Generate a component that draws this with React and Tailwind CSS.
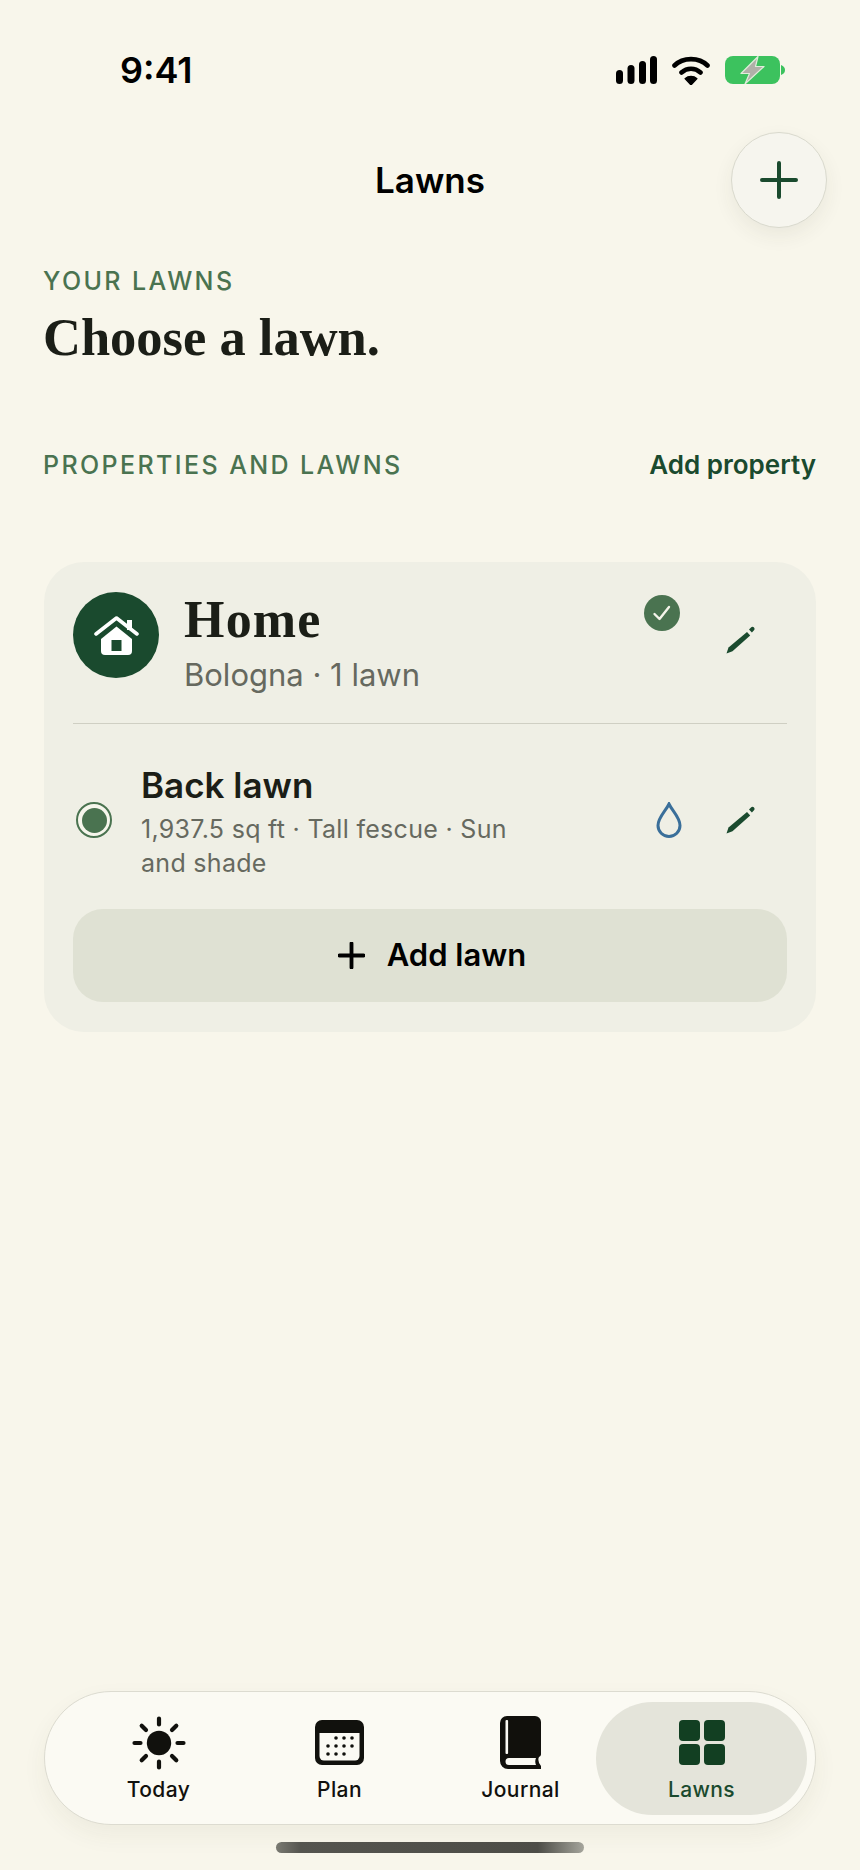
const Pencil = () => (
  <svg width="30" height="30" viewBox="0 0 30 30" fill="#1a4a2e">
    <path d="M0.5 28.5L2.5 22.5L21 7L24.2 10.5L6.5 26.3Z" />
    <path d="M23 4.6L25 2.4A2 2 0 0 1 27.8 2.3L28 2.5A2 2 0 0 1 28 5.3L25.9 7.6Z" />
  </svg>
);

const PlusIcon = ({ size, stroke, color }) => (
  <svg width={size} height={size} viewBox="0 0 38 38" fill="none" stroke={color} strokeWidth={stroke} strokeLinecap="round">
    <path d="M19 2V36M2 19H36" />
  </svg>
);

const StatusIcons = () => (
  <div className="flex items-center gap-[15px]">
    <svg width="41" height="28" viewBox="0 0 41 28" fill="#000">
      <rect x="0" y="14" width="7" height="14" rx="3.5" />
      <rect x="11.5" y="9" width="7" height="19" rx="3.5" />
      <rect x="23" y="5" width="7" height="23" rx="3.5" />
      <rect x="34" y="0" width="7" height="28" rx="3.5" />
    </svg>
    <svg width="38" height="29" viewBox="0 0 38 29">
      <path d="M2.5 9.5C11 1, 27 1, 35.5 9.5M9.5 16.5C15 11.5, 23 11.5, 28.5 16.5" fill="none" stroke="#000" strokeWidth="4.6" strokeLinecap="round" />
      <path d="M19 29L13 22.6C16.5 19.6, 21.5 19.6, 25 22.6Z" fill="#000" stroke="#000" strokeWidth="1.2" strokeLinejoin="round" />
    </svg>
    <svg width="60" height="28" viewBox="0 0 60 28">
      <rect x="0" y="0" width="55" height="28" rx="8" fill="#3cc25e" />
      <path d="M56 9C59 10, 60 12, 60 14C60 16, 59 18, 56 19Z" fill="#3cc25e" />
      <path d="M33 0.5L16 17.5H24.5L20 28L39 10.5H30.5Z" fill="#b0b0a8" stroke="#dfeeda" strokeWidth="1.2" strokeLinejoin="round" />
    </svg>
  </div>
);

const tabs = [
  {
    label: "Today",
    icon: (
      <svg width="54" height="54" viewBox="0 0 54 54" fill="none" stroke="#11110d" strokeWidth="4.2" strokeLinecap="round">
        <circle cx="27" cy="27" r="12.2" fill="#11110d" stroke="none" />
        <path d="M27 2.5V8.5M27 45.5V51.5M2.5 27H8.5M45.5 27H51.5M9.7 9.7L14 14M40 40L44.3 44.3M9.7 44.3L14 40M40 14L44.3 9.7" />
      </svg>
    ),
  },
  {
    label: "Plan",
    icon: (
      <svg width="49" height="45" viewBox="0 0 49 45" fill="#11110d">
        <rect width="49" height="45" rx="7" />
        <path d="M4.5 13H44.5V36A4.5 4.5 0 0 1 40 40.5H9A4.5 4.5 0 0 1 4.5 36Z" fill="#fbfaf4" />
        {[[21, 18], [29, 18], [37, 18], [13, 26], [21, 26], [29, 26], [37, 26], [13, 34], [21, 34], [29, 34]].map(([cx, cy]) => (
          <circle key={cx + "-" + cy} cx={cx} cy={cy} r="1.8" />
        ))}
      </svg>
    ),
  },
  {
    label: "Journal",
    icon: (
      <svg width="41" height="53" viewBox="0 0 41 53" fill="#11100c">
        <path d="M7 0H35A6 6 0 0 1 41 6V38A3 3 0 0 1 39 41Q37 45 41 50V53H8A8 8 0 0 1 0 45V7A7 7 0 0 1 7 0Z" />
        <path d="M9 42H36Q34.5 45.5 36 49H9A3.5 3.5 0 0 1 9 42Z" fill="#fbfaf4" />
        <rect x="5.5" y="4" width="2.6" height="34" rx="1" fill="#fbfaf4" />
      </svg>
    ),
  },
  {
    label: "Lawns",
    active: true,
    icon: (
      <svg width="46" height="45" viewBox="0 0 46 45" fill="#123f22">
        <rect width="21" height="21" rx="4" />
        <rect x="25" width="21" height="21" rx="4" />
        <rect y="24" width="21" height="21" rx="4" />
        <rect x="25" y="24" width="21" height="21" rx="4" />
      </svg>
    ),
  },
];

const TabBar = () => (
  <div className="mx-[44px] grid h-[134px] grid-cols-4 items-center rounded-full border border-[#dcdbd0] bg-[#fbfaf3] px-[23px] shadow-[0_10px_24px_rgba(60,60,40,0.06)]">
    {tabs.map((tab) => (
      <div
        key={tab.label}
        className={
          tab.active
            ? "-mx-[15px] flex h-[113px] flex-col items-center rounded-full bg-[#e4e4da] pt-[14px] text-[#1a4a2e]"
            : "flex h-[113px] flex-col items-center pt-[14px] text-[#11110d]"
        }
      >
        <div className="flex h-[54px] items-center justify-center">{tab.icon}</div>
        <div className="mt-[7px] text-[21px] leading-[26px] font-medium tracking-[0.4px]">{tab.label}</div>
      </div>
    ))}
  </div>
);

export default function App() {
  return (
    <div className="flex h-[1870px] w-[860px] flex-col overflow-hidden bg-[#f8f6eb] font-['Inter',sans-serif]">
      <div className="flex h-[132px] items-center justify-between pt-[8px] pr-[75px] pl-[120px]">
        <span className="text-[36px] font-semibold text-black">9:41</span>
        <StatusIcons />
      </div>

      <div className="grid h-[96px] grid-cols-[96px_1fr_96px] items-center px-[33px]">
        <div />
        <div className="text-center text-[35px] font-semibold text-black">Lawns</div>
        <button className="flex size-[96px] items-center justify-center rounded-full border border-[#d9d9cd] bg-[#f6f5ee] shadow-[0_8px_20px_rgba(60,60,40,0.07)]">
          <PlusIcon size={38} stroke={4} color="#1a4a2e" />
        </button>
      </div>

      <div className="px-[44px] pt-[38px]">
        <div className="-ml-px text-[25px] leading-[30px] font-medium tracking-[2.4px] text-[#4a7350]">YOUR LAWNS</div>
        <h1 className="-ml-px mt-[11px] font-['Liberation_Serif',serif] text-[52.5px] leading-[60px] font-bold text-[#1b1e17]">Choose a lawn.</h1>

        <div className="mt-[83px] flex items-center justify-between">
          <span className="-ml-px text-[25px] leading-[30px] font-medium tracking-[2.4px] text-[#4a7350]">PROPERTIES AND LAWNS</span>
          <span className="text-[26px] leading-[30px] font-semibold text-[#1a4a2e]">Add property</span>
        </div>

        <div className="mt-[82px] rounded-[40px] bg-[#efefe5] px-[29px] pt-[30px] pb-[30px]">
          <div className="flex items-start border-b border-[#cfcfc3] pb-[29px]">
            <div className="flex size-[86px] shrink-0 items-center justify-center rounded-full bg-[#1a4a2e]">
              <svg width="45" height="39" viewBox="0 0 45 39">
                <path d="M2 18L22.5 2L43 18" fill="none" stroke="#fff" strokeWidth="3.6" strokeLinecap="round" strokeLinejoin="round" />
                <rect x="33" y="4" width="5" height="10" fill="#fff" />
                <path d="M7 23L22.5 10.5L38 23V35A4 4 0 0 1 34 39H11A4 4 0 0 1 7 35Z" fill="#fff" />
                <rect x="17.5" y="24" width="10" height="11" fill="#1a4a2e" />
              </svg>
            </div>
            <div className="ml-[25px] flex-1">
              <div className="font-['Liberation_Serif',serif] text-[52px] leading-[56px] font-bold tracking-[1.2px] text-[#1b1e17]">Home</div>
              <div className="mt-[8px] text-[31px] leading-[38px] text-[#66695f]">Bologna · 1 lawn</div>
            </div>
            <div className="mt-[3px] flex size-[36px] items-center justify-center rounded-full bg-[#4a7350]">
              <svg width="20" height="18" viewBox="0 0 20 18" fill="none" stroke="#f4f4ea" strokeWidth="2.4" strokeLinecap="round" strokeLinejoin="round">
                <path d="M2.5 10L7.5 15L17 3" />
              </svg>
            </div>
            <div className="mt-[33px] mr-[31px] ml-[46px]">
              <Pencil />
            </div>
          </div>

          <div className="flex items-center pt-[36px] pl-[3px]">
            <div className="flex size-[36px] shrink-0 items-center justify-center rounded-full border-2 border-[#4a7350] bg-[#f6f6ec]">
              <div className="size-[25px] rounded-full bg-[#4a7350]" />
            </div>
            <div className="ml-[29px] w-[390px] pt-[4px]">
              <div className="text-[35px] leading-[42px] font-semibold text-[#1b1e17]">Back lawn</div>
              <div className="mt-[6px] text-[25px] leading-[34px] tracking-[0.3px] text-[#66695f]">1,937.5 sq ft · Tall fescue · Sun and shade</div>
            </div>
            <svg className="ml-[125px]" width="26" height="36" viewBox="0 0 26 36" fill="none" stroke="#3a6f9a" strokeWidth="3">
              <path d="M13 2C9.5 9.5 2 15.5 2 23.5A11 11 0 0 0 24 23.5C24 15.5 16.5 9.5 13 2Z" />
            </svg>
            <div className="ml-[44px]">
              <Pencil />
            </div>
          </div>

          <button className="mt-[29px] flex h-[93px] w-full items-center justify-center gap-[22px] rounded-[30px] bg-[#dfe1d3] pl-[4px] text-[31px] font-semibold text-black">
            <PlusIcon size={27} stroke={5.4} color="#000" />
            Add lawn
          </button>
        </div>
      </div>

      <div className="mt-auto">
        <TabBar />
        <div className="mt-[17px] mb-[17px] flex justify-center">
          <div className="h-[11px] w-[308px] rounded-full bg-[linear-gradient(90deg,#7a7a72,#55554f_8%,#4d4d47_85%,#a5a59c)]" />
        </div>
      </div>
    </div>
  );
}
